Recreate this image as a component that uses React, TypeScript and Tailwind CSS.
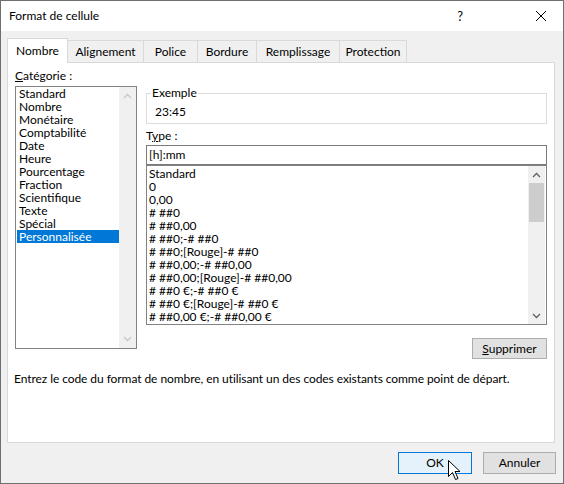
import React from "react";

const Up = ({ c = "#606060" }: { c?: string }) => (
  <svg width="9" height="6" viewBox="0 0 9 6"><polyline points="1,5 4.5,1.5 8,5" fill="none" stroke={c} strokeWidth="1.3" /></svg>
);
const Down = ({ c = "#606060" }: { c?: string }) => (
  <svg width="9" height="6" viewBox="0 0 9 6"><polyline points="1,1 4.5,4.5 8,1" fill="none" stroke={c} strokeWidth="1.3" /></svg>
);

const categories = [
  "Standard", "Nombre", "Monétaire", "Comptabilité", "Date", "Heure", "Pourcentage",
  "Fraction", "Scientifique", "Texte", "Spécial", "Personnalisée",
];

const formats = [
  "Standard", "0", "0,00", "# ##0", "# ##0,00", "# ##0;-# ##0", "# ##0;[Rouge]-# ##0",
  "# ##0,00;-# ##0,00", "# ##0,00;[Rouge]-# ##0,00", "# ##0 €;-# ##0 €",
  "# ##0 €;[Rouge]-# ##0 €", "# ##0,00 €;-# ##0,00 €",
];

const tabs = [
  { t: "Alignement", w: "w-[76px]" },
  { t: "Police", w: "w-[54px]" },
  { t: "Bordure", w: "w-[59px]" },
  { t: "Remplissage", w: "w-[83px]" },
  { t: "Protection", w: "w-[67px]" },
];

export default function App() {
  return (
    <div className="relative w-[564px] h-[484px] border border-[#6f6f6f] bg-[#f0f0f0] flex flex-col text-[12px] text-black font-['Lato',sans-serif] leading-[16px] overflow-hidden">
      {/* Title bar */}
      <div className="h-[30px] bg-white flex items-center pl-[8px] shrink-0">
        <span className="text-[12px]">Format de cellule</span>
        <span className="ml-auto mr-[72px] text-[13px]">?</span>
        <svg width="12" height="12" viewBox="0 0 12 12" className="mr-[16px]">
          <path d="M1 1 L11 11 M11 1 L1 11" stroke="#000" strokeWidth="1" />
        </svg>
      </div>

      {/* Tabs */}
      <div className="flex items-end pl-[6px] pt-[7px] h-[31px] shrink-0">
        <div className="relative z-10 -mb-px w-[61px] h-[25px] bg-white border border-b-0 border-[#d9d9d9] flex items-center justify-center pb-[1px]">
          Nombre
        </div>
        {tabs.map((t) => (
          <div key={t.t} className={`${t.w} h-[22px] bg-[#f0f0f0] border border-l-0 border-b-0 border-[#d9d9d9] flex items-center justify-center`}>
            {t.t}
          </div>
        ))}
      </div>

      {/* Panel */}
      <div className="ml-[6px] w-[548px] h-[381px] bg-white border border-[#d9d9d9] flex flex-col shrink-0">
        <div className="flex pt-[5px] pl-[7px]">
          {/* Left column */}
          <div className="flex flex-col w-[122px]">
            <div className="h-[16px]"><span className="underline">C</span>atégorie :</div>
            <div className="mt-[2px] h-[263px] border border-[#828282] flex">
              <div className="flex-1 pl-px leading-[13px]">
                {categories.map((c, i) => (
                  <div
                    key={c}
                    className={
                      i === categories.length - 1
                        ? "h-[13px] pl-[2px] bg-[#0078d7] text-white"
                        : "h-[13px] pl-[2px]"
                    }
                  >
                    {c}
                  </div>
                ))}
              </div>
              <div className="w-[17px] bg-[#f0f0f0] flex flex-col items-center justify-between py-[6px]">
                <Up c="#c6c6c6" />
                <Down c="#c6c6c6" />
              </div>
            </div>
          </div>

          {/* Right column */}
          <div className="ml-[9px] w-[401px] flex flex-col">
            <div className="relative mt-[25px] h-[31px] border border-[#dcdcdc]">
              <span className="absolute -top-[9px] left-[4px] bg-white px-px">Exemple</span>
              <div className="pt-[10px] pl-[8px]">23:45</div>
            </div>
            <div className="mt-[4px] h-[16px]">T<span className="underline">y</span>pe :</div>
            <div className="mt-px h-[20px] border border-[#7a7a7a] pl-[2px] flex items-center">[h]:mm</div>
            <div className="h-[160px] border border-[#828282] flex">
              <div className="flex-1 pl-[2px] pt-px leading-[13px] overflow-hidden">
                {formats.map((f) => (
                  <div key={f} className="h-[13px] whitespace-nowrap">{f}</div>
                ))}
              </div>
              <div className="w-[17px] bg-[#f0f0f0] flex flex-col mr-px">
                <div className="h-[17px] flex items-center justify-center"><Up /></div>
                <div className="h-[39px] bg-[#cdcdcd] mx-px" />
                <div className="flex-1" />
                <div className="h-[17px] flex items-center justify-center"><Down /></div>
              </div>
            </div>
            <div className="mt-[13px] self-end w-[75px] h-[21px] bg-[#e1e1e1] border border-[#adadad] flex items-center justify-center">
              <span><span className="underline">S</span>upprimer</span>
            </div>
          </div>
        </div>
        <div className="mt-[12px] pl-[6px] h-[16px] whitespace-nowrap tracking-[-0.07px]">
          Entrez le code du format de nombre, en utilisant un des codes existants comme point de départ.
        </div>
      </div>

      {/* Bottom buttons */}
      <div className="flex justify-end gap-[11px] pr-[7px] mt-[9px]">
        <div className="w-[74px] h-[22px] bg-[#e5f1fb] border border-[#0078d7] flex items-center justify-center">OK</div>
        <div className="w-[73px] h-[22px] bg-[#e1e1e1] border border-[#adadad] flex items-center justify-center">Annuler</div>
      </div>

      {/* Mouse cursor */}
      <svg className="absolute left-[447px] top-[459px]" width="13" height="21" viewBox="0 0 13 21">
        <path d="M0.5 0.5 L0.5 16.5 L4.5 12.5 L7.5 19.5 L10 18.5 L7 11.5 L12 11.5 Z" fill="#fff" stroke="#000" strokeWidth="1" strokeLinejoin="miter" />
      </svg>
    </div>
  );
}
